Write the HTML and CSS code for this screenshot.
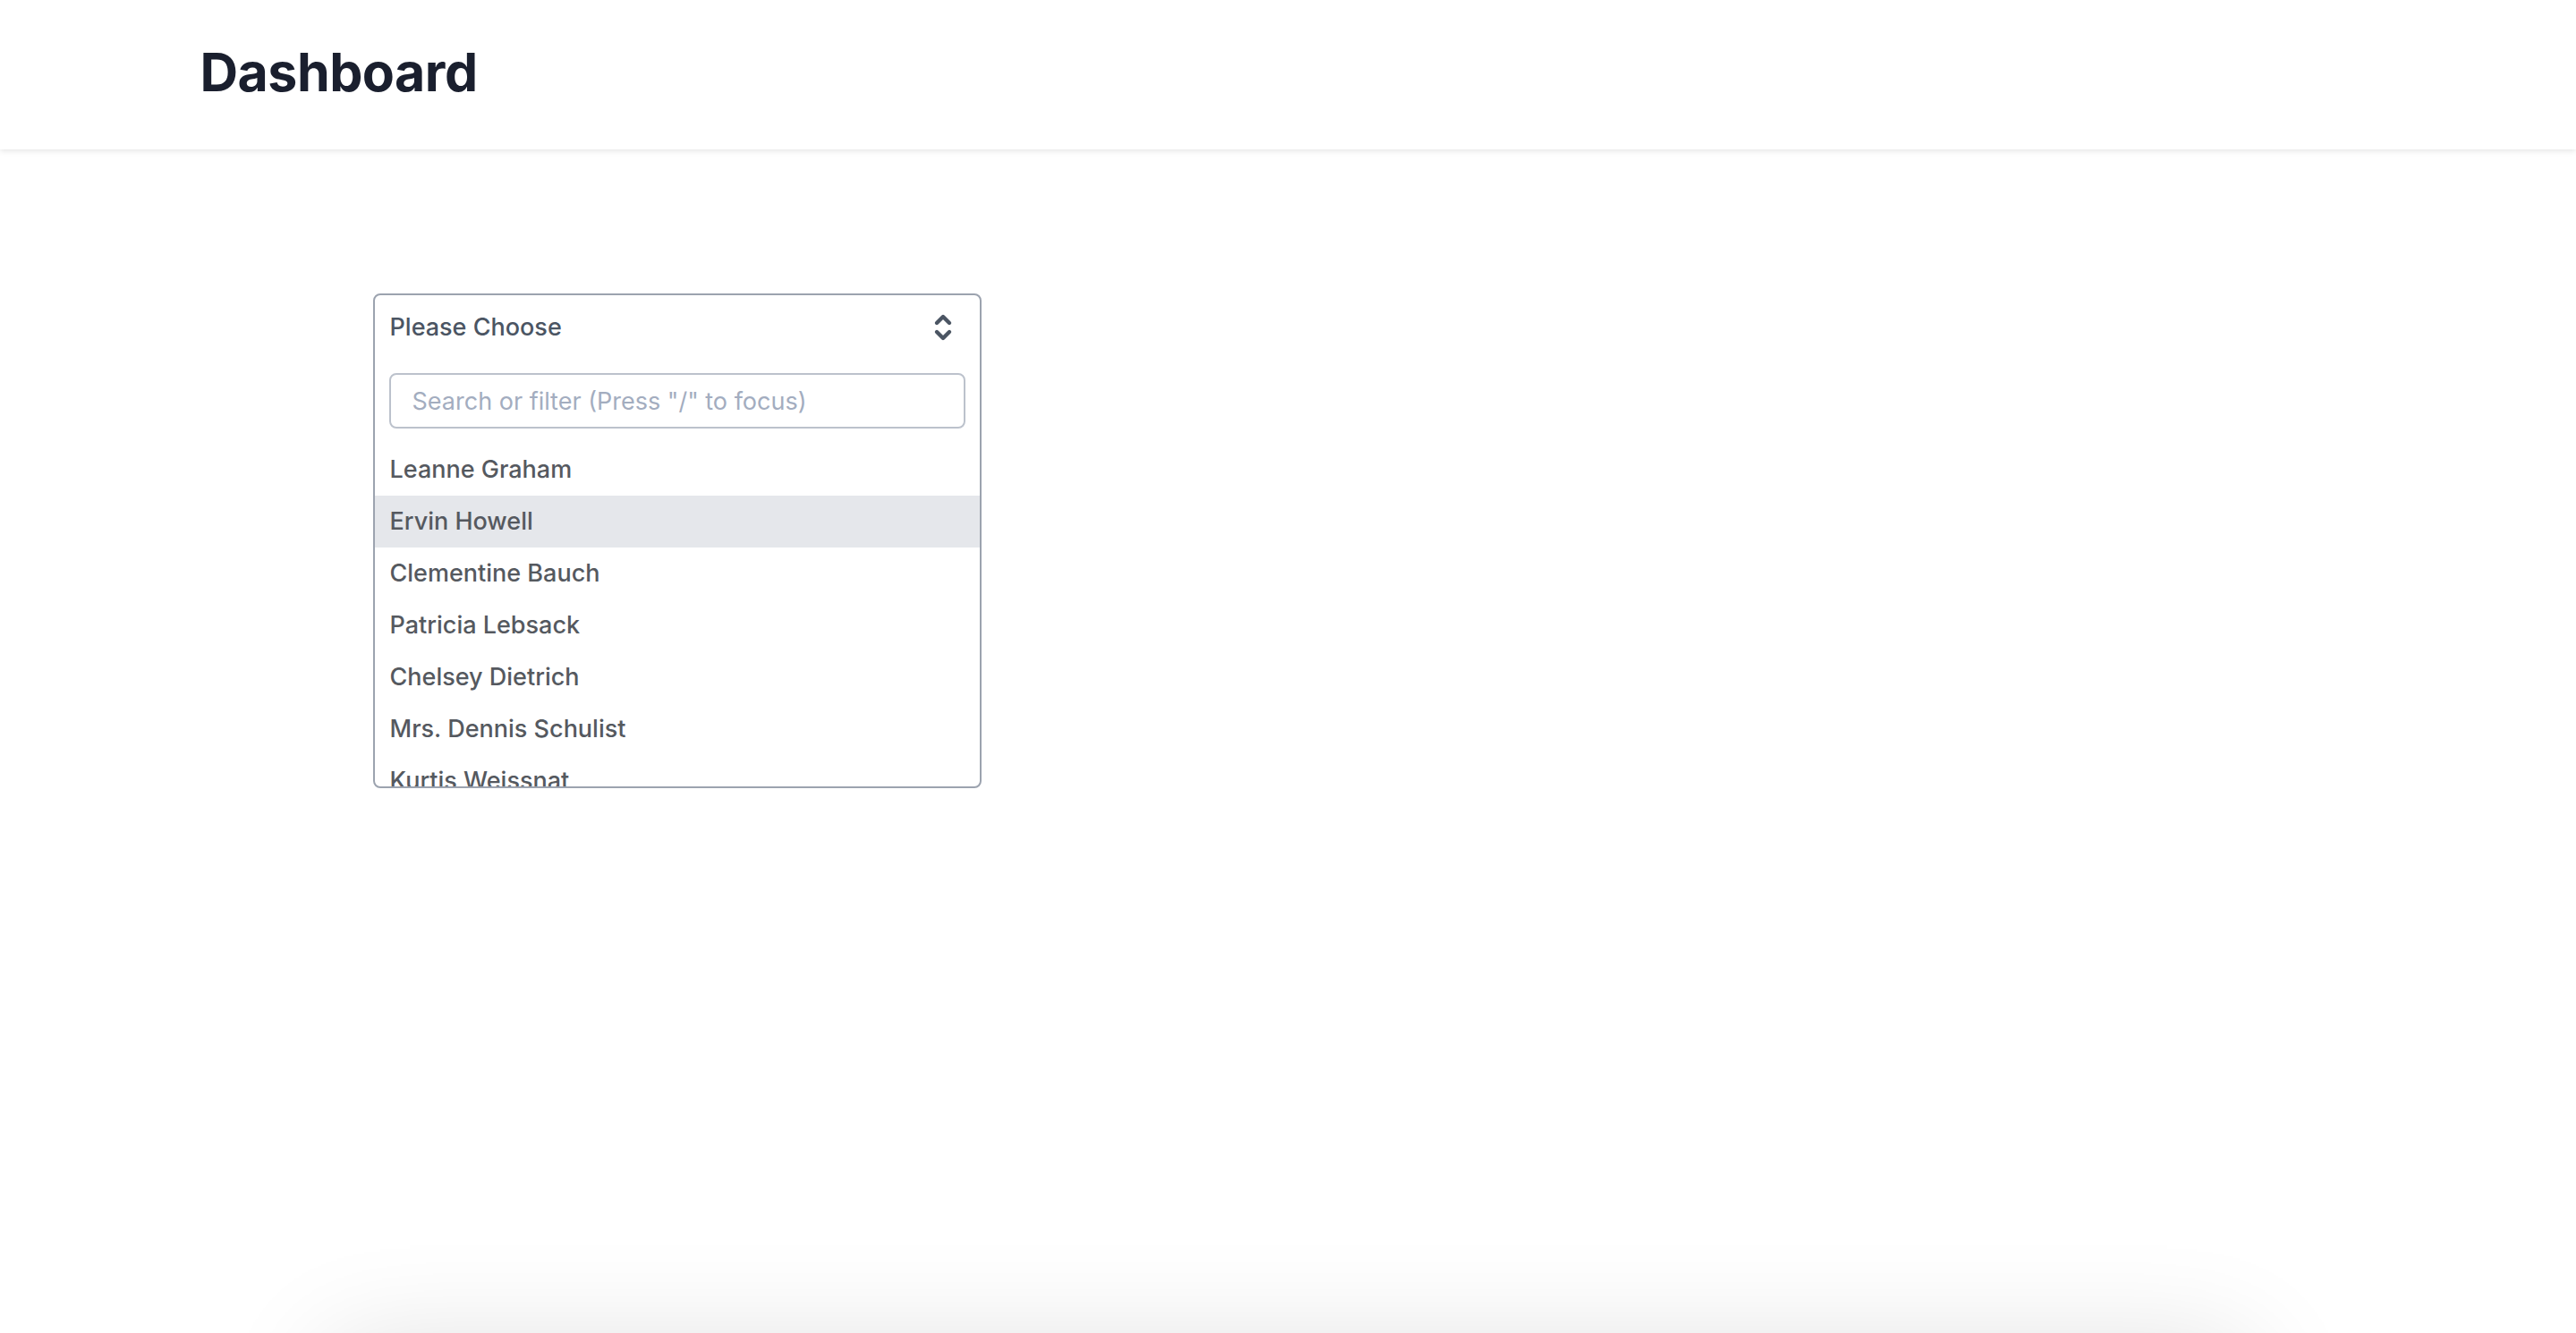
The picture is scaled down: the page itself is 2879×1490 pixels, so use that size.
FILE: index.html
```html
<!DOCTYPE html>
<html lang="en">

<head>
    <meta charset="UTF-8">
    <meta name="viewport" content="width=device-width, initial-scale=1.0">
    <title>Dashboard</title>
    <link rel="stylesheet" href="styles.css">
</head>

<body>
    <header class="topbar">
        <div class="wrap">
            <h1 class="title">Dashboard</h1>
        </div>
    </header>

    <main class="wrap content">
        <div class="select">
            <div class="select-trigger">
                <span>Please Choose</span>
                <svg class="select-icon" viewBox="0 0 20 20" fill="none" stroke="currentColor" stroke-width="2.2" stroke-linecap="round" stroke-linejoin="round" aria-hidden="true">
                    <path d="M6.5 7.5L10 4l3.5 3.5" />
                    <path d="M6.5 12.5L10 16l3.5-3.5" />
                </svg>
            </div>
            <div class="select-search">
                <input type="text" placeholder='Search or filter (Press "/" to focus)'>
            </div>
            <ul class="select-list">
                <li>Leanne Graham</li>
                <li class="active">Ervin Howell</li>
                <li>Clementine Bauch</li>
                <li>Patricia Lebsack</li>
                <li>Chelsey Dietrich</li>
                <li>Mrs. Dennis Schulist</li>
                <li>Kurtis Weissnat</li>
                <li>Nicholas Runolfsdottir V</li>
                <li>Glenna Reichert</li>
                <li>Clementina DuBuque</li>
            </ul>
        </div>
    </main>

    <!-- card below the fold, only its shadow shows -->
    <div class="panel"></div>
</body>

</html>
```

FILE: styles.css
```css
html,
body {
    margin: 0;
    height: 100%;
}

body {
    background: #fff;
    font-family: Inter, "Liberation Sans", sans-serif;
    color: #4b5563;
    overflow: hidden;
}

.wrap {
    max-width: 2560px;
    margin: 0 auto;
    padding: 0 64px;
    box-sizing: border-box;
}

.topbar {
    background: #fff;
    height: 167px;
    box-shadow: 0 2px 6px rgba(0, 0, 0, 0.1);
    position: relative;
    z-index: 1;
}

.topbar .wrap {
    height: 100%;
    display: flex;
    align-items: center;
    padding-bottom: 6px;
}

.title {
    margin: 0;
    font-size: 59px;
    font-weight: 700;
    color: #1a1f2e;
    letter-spacing: -0.5px;
    line-height: 72px;
}

.content {
    height: calc(100vh - 167px);
    padding-top: 161px;
    padding-left: 257px;
}

.select {
    width: 680px;
    border: 2px solid #9ca3af;
    border-radius: 8px;
    background: #fff;
    overflow: hidden;
    box-sizing: border-box;
}

.select-trigger {
    height: 71px;
    display: flex;
    align-items: center;
    justify-content: space-between;
    padding: 0 21px 0 17px;
    font-size: 27px;
    font-weight: 500;
    color: #4b5563;
}

.select-icon {
    width: 40px;
    height: 40px;
    color: #4b5563;
}

.select-search {
    padding: 16px 16px 0;
}

.select-search input {
    width: 100%;
    height: 62px;
    box-sizing: border-box;
    border: 2px solid #bcc2cc;
    border-radius: 8px;
    padding: 0 24px;
    font-family: inherit;
    font-size: 27px;
    color: #374151;
    outline: none;
}

.select-search input::placeholder {
    color: #a3adbf;
}

.select-list {
    list-style: none;
    margin: 17px 0 0;
    padding: 0;
    height: 383px;
    overflow: hidden;
}

.select-list li {
    height: 58px;
    line-height: 58px;
    padding: 0 17px;
    font-size: 27px;
    font-weight: 500;
    color: #55595f;
    cursor: pointer;
}

.select-list li.active {
    background-color: #e5e7eb;
}

.panel {
    width: 2140px;
    height: 400px;
    margin: 20px auto 0;
    background: #fff;
    box-shadow: 0 0 120px rgba(0, 0, 0, 0.14);
}
```
